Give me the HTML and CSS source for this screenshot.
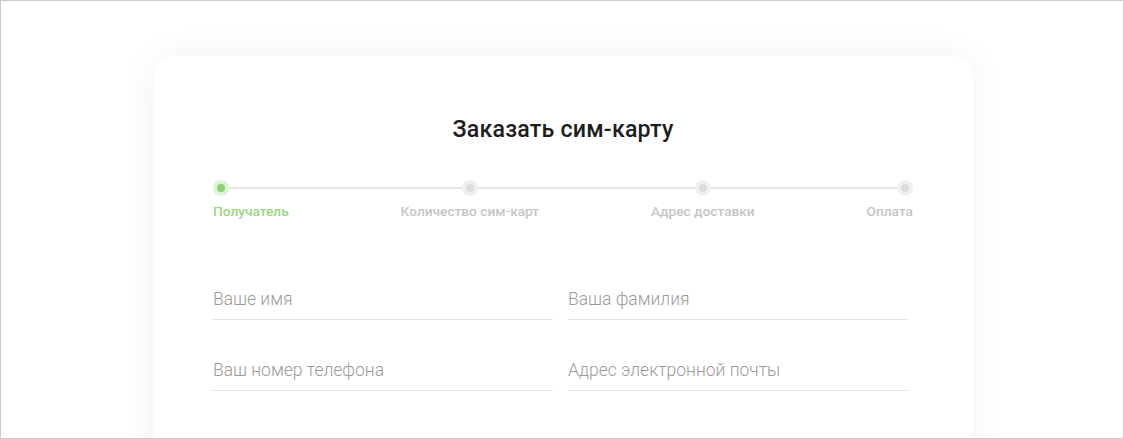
FILE: index.html
```html
<!DOCTYPE html>
<html lang="ru">
<head>
  <meta charset="UTF-8">
  <meta name="viewport" content="width=device-width, initial-scale=1.0">
  <title>Заказать сим-карту</title>
  <link rel="stylesheet" href="styles.css">
</head>
<body>

  <div class="frame">
    <div class="card">
      <h1 class="title">Заказать сим-карту</h1>

      <ul class="steps">
        <li class="step active"><span class="dot"></span><span class="name">Получатель</span></li>
        <li class="step"><span class="dot"></span><span class="name">Количество сим-карт</span></li>
        <li class="step"><span class="dot"></span><span class="name">Адрес доставки</span></li>
        <li class="step"><span class="dot"></span><span class="name">Оплата</span></li>
      </ul>

      <form class="form">
        <input class="field" type="text" placeholder="Ваше имя">
        <input class="field" type="text" placeholder="Ваша фамилия">
        <input class="field" type="tel" placeholder="Ваш номер телефона">
        <input class="field" type="email" placeholder="Адрес электронной почты">
      </form>
    </div>
  </div>

</body>
</html>
```

FILE: styles.css
```css
* {
  margin: 0;
  padding: 0;
  box-sizing: border-box;
}

ul, li {
  list-style: none;
}

body {
  font-family: Roboto, "Liberation Sans", sans-serif;
  background-color: #fff;
}

.frame {
  height: 439px;
  padding-left: 2px;
  border: 1px solid #cbcbcb;
  overflow: hidden;
}

.card {
  width: 820px;
  height: 500px;
  margin: 55px auto 0;
  padding: 60px 60px 0;
  background-color: #fff;
  border-radius: 20px;
  box-shadow: 0 0 36px rgba(0, 0, 0, 0.06);
}

.title {
  font-size: 23.2px;
  font-weight: 500;
  line-height: 27px;
  color: #1e1e1e;
  text-align: center;
  letter-spacing: 0.2px;
}

.steps {
  position: relative;
  display: flex;
  justify-content: space-between;
  margin-top: 37px;
}

.steps::before {
  content: "";
  position: absolute;
  left: 8px;
  right: 8px;
  top: 7px;
  height: 2px;
  background-color: #e6e6e6;
}

.step {
  position: relative;
  display: flex;
  flex-direction: column;
  align-items: center;
}

.step:first-child {
  align-items: flex-start;
}

.step:last-child {
  align-items: flex-end;
}

.dot {
  width: 16px;
  height: 16px;
  border-radius: 50%;
  background-color: #f0f0f0;
  display: flex;
  justify-content: center;
  align-items: center;
}

.dot::after {
  content: "";
  width: 8px;
  height: 8px;
  border-radius: 50%;
  background-color: #dcdcdc;
}

.name {
  margin-top: 7px;
  font-size: 13.7px;
  line-height: 16px;
  font-weight: 500;
  color: #c6c6c6;
}

.step.active .dot {
  background-color: #dcf6d2;
}

.step.active .dot::after {
  background-color: #8ed072;
}

.step.active .name {
  color: #9ad67f;
}

.form {
  display: grid;
  grid-template-columns: 340px 340px;
  column-gap: 15px;
  row-gap: 30px;
  margin-top: 60px;
}

.field {
  height: 41px;
  border: none;
  border-bottom: 1px solid #e3e3e3;
  padding: 0;
  font-family: Roboto, "Liberation Sans", sans-serif;
  font-size: 17.5px;
  font-weight: 300;
  color: #333;
  outline: none;
  background: transparent;
}

.field::placeholder {
  color: #9b9b9b;
}
```
